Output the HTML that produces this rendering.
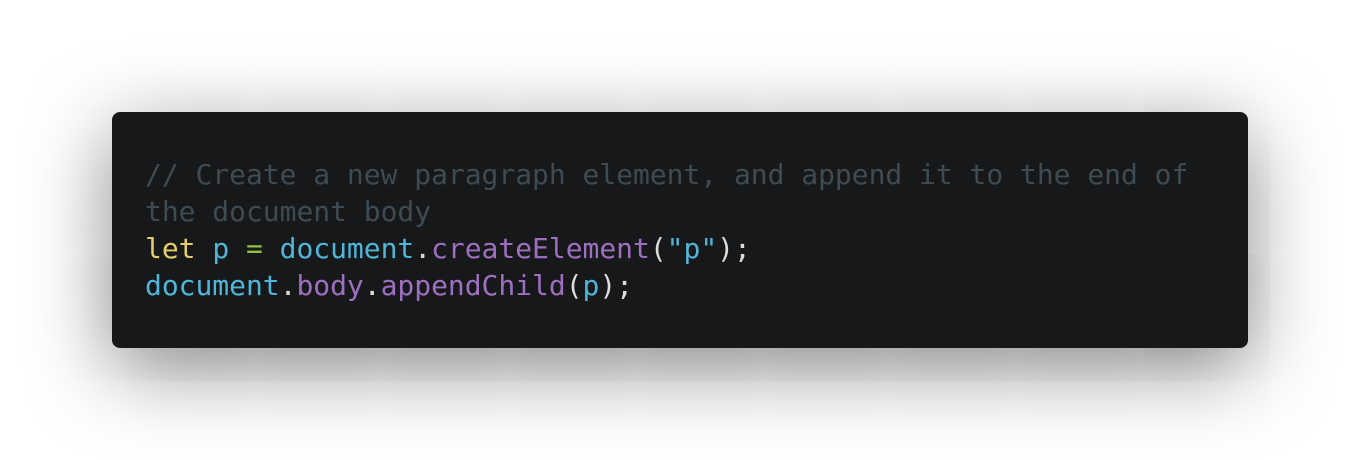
<!DOCTYPE html>
<html><head><style>
html,body{margin:0;width:1360px;height:460px;background:#fff;overflow:hidden}
.box{position:absolute;left:112px;top:112px;width:1136px;height:236px;background:#17181a;border-radius:8px;box-shadow:0 20px 80px rgba(0,0,0,0.5)}
pre{margin:0;position:absolute;left:33px;top:43.5px;font-family:"DejaVu Sans Mono",monospace;font-size:28px;letter-spacing:-0.03px;line-height:37.2px;color:#dcdcdc;white-space:pre}
.c{color:#3e4b53}.y{color:#e5cd6a}.b{color:#4fb5d9}.p{color:#9e6fc1}.g{color:#92c140}
</style></head><body>
<div class="box"><pre><span class="c">// Create a new paragraph element, and append it to the end of
the document body</span>
<span class="y">let</span> <span class="b">p</span> <span class="g">=</span> <span class="b">document</span>.<span class="p">createElement</span>(<span class="b">"p"</span>);
<span class="b">document</span>.<span class="p">body</span>.<span class="p">appendChild</span>(<span class="b">p</span>);</pre></div>
</body></html>
